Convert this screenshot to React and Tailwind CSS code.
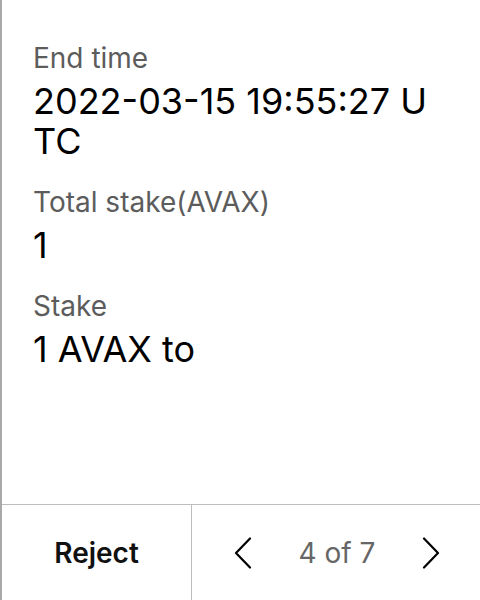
const rows = [
  { label: "End time", value: "2022-03-15 19:55:27 UTC" },
  { label: "Total stake(AVAX)", value: "1" },
  { label: "Stake", value: "1 AVAX to" },
];

function Chevron({ dir }) {
  const points = dir === "left" ? "16,1.5 2,16 16,30.5" : "2,1.5 16,16 2,30.5";
  return (
    <svg width="18" height="32" viewBox="0 0 18 32" fill="none" stroke="black" strokeWidth="2.2" strokeLinecap="round" strokeLinejoin="round">
      <polyline points={points} />
    </svg>
  );
}

export default function App() {
  return (
    <div className="flex h-[600px] w-[480px] flex-col border-l-2 border-[#a9a9a9] bg-white font-['Inter',sans-serif]">
      {/* details */}
      <div className="flex flex-1 flex-col gap-[24px] pl-[31px] pr-[44px] pt-[41px]">
        {rows.map((row) => (
          <div key={row.label} className="flex flex-col gap-[6px]">
            <div className="text-[28px] leading-[34px] text-[#5c5c5c]">{row.label}</div>
            <div className="break-all text-[36px] leading-[40px] text-black">{row.value}</div>
          </div>
        ))}
      </div>

      {/* actions */}
      <div className="flex h-[96px] border-t border-[#bdbdbd]">
        <button className="flex w-[190px] items-center justify-center border-r border-[#bdbdbd] text-[28px] font-semibold text-[#111]">
          Reject
        </button>
        <div className="flex flex-1 items-center justify-between pl-[42px] pr-[40px]">
          <Chevron dir="left" />
          <span className="text-[28px] text-[#666]">4 of 7</span>
          <Chevron dir="right" />
        </div>
      </div>
    </div>
  );
}
